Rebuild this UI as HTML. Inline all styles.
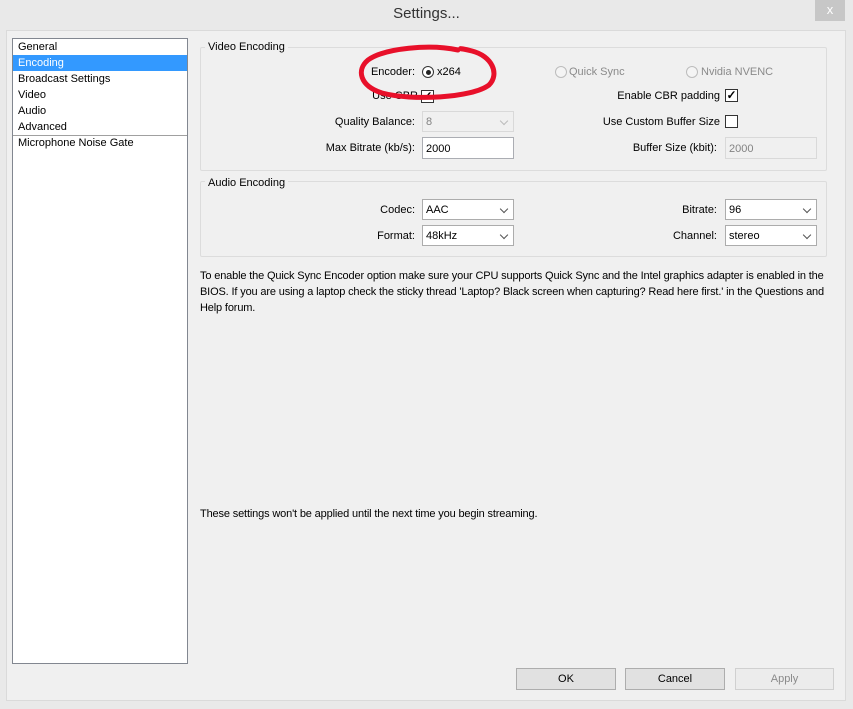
<!DOCTYPE html>
<html><head><meta charset="utf-8"><style>
*{box-sizing:border-box;margin:0;padding:0}
body{width:853px;height:709px;background:#e9e9e9;font-family:"Liberation Sans",sans-serif;font-size:11px;color:#000;position:relative;overflow:hidden}
.a{position:absolute;white-space:nowrap}
.r{text-align:right}
.client{position:absolute;left:6px;top:30px;width:840px;height:671px;background:#f0f0f0;border:1px solid #dadada}
.list{position:absolute;left:12px;top:38px;width:176px;height:626px;background:#fff;border:1px solid #828790}
.grp{position:absolute;border:1px solid #dcdcdc;border-radius:2px}
.combo{position:absolute;height:21px;border:1px solid #acacac;background:#fff;padding:4px 3px}
.combo.dis{background:#f0f0f0;border-color:#d9d9d9;color:#838383}
.combo:after{content:"";position:absolute;right:6px;top:6px;width:5px;height:5px;border-right:1.5px solid #555;border-bottom:1.5px solid #555;transform:rotate(45deg)}
.combo.dis:after{border-color:#bbb}
.inp{position:absolute;height:22px;border:1px solid #abadb3;background:#fff;padding:5px 3px}
.cb{position:absolute;width:13px;height:13px;border:1px solid #333;background:#fff;font-size:12px;line-height:11px;text-align:center;font-weight:bold}
.rad{position:absolute;width:12px;height:12px;border-radius:50%;border:1px solid #333;background:#fff}
.rad.dis{border-color:#bcbcbc;background:#f4f4f4}
.btn{position:absolute;height:22px;border:1px solid #adadad;background:#e1e1e1;text-align:center;line-height:20px}
</style></head><body>
<div class="a" style="left:0;top:5px;width:853px;text-align:center;font-size:15px;color:#333">Settings...</div>
<div class="a" style="left:815px;top:0;width:30px;height:21px;background:#c7c7c7;color:#fff;text-align:center;font-size:13px;line-height:20px">x</div>
<div class="client"></div>
<div class="list"></div>
<div class="a" style="left:13px;top:55px;width:174px;height:16px;background:#3399ff"></div>
<div class="a" style="left:18px;top:41px">General</div>
<div class="a" style="left:18px;top:57px;color:#fff">Encoding</div>
<div class="a" style="left:18px;top:73px">Broadcast Settings</div>
<div class="a" style="left:18px;top:89px">Video</div>
<div class="a" style="left:18px;top:105px">Audio</div>
<div class="a" style="left:18px;top:121px">Advanced</div>
<div class="a" style="left:13px;top:135px;width:174px;height:1px;background:#a0a0a0"></div>
<div class="a" style="left:18px;top:137px">Microphone Noise Gate</div>

<div class="grp" style="left:200px;top:47px;width:627px;height:124px"></div>
<div class="a" style="left:205px;top:41px;background:#f0f0f0;padding:0 3px">Video Encoding</div>
<div class="a r" style="left:300px;top:66px;width:115px">Encoder:</div>
<div class="rad" style="left:422px;top:66px"><div style="position:absolute;left:2.5px;top:2.5px;width:5px;height:5px;border-radius:50%;background:#222"></div></div>
<div class="a" style="left:437px;top:66px">x264</div>
<div class="rad dis" style="left:555px;top:66px"></div>
<div class="a" style="left:569px;top:66px;color:#8a8a8a">Quick Sync</div>
<div class="rad dis" style="left:686px;top:66px"></div>
<div class="a" style="left:701px;top:66px;color:#8a8a8a">Nvidia NVENC</div>
<div class="a r" style="left:300px;top:90px;width:118px">Use CBR</div>
<div class="cb" style="left:421px;top:90px">✓</div>
<div class="a r" style="left:560px;top:90px;width:160px">Enable CBR padding</div>
<div class="cb" style="left:725px;top:89px">✓</div>
<div class="a r" style="left:300px;top:116px;width:115px">Quality Balance:</div>
<div class="combo dis" style="left:422px;top:111px;width:92px">8</div>
<div class="a r" style="left:560px;top:116px;width:160px">Use Custom Buffer Size</div>
<div class="cb" style="left:725px;top:115px"></div>
<div class="a r" style="left:280px;top:142px;width:135px">Max Bitrate (kb/s):</div>
<div class="inp" style="left:422px;top:137px;width:92px">2000</div>
<div class="a r" style="left:560px;top:142px;width:157px">Buffer Size (kbit):</div>
<div class="inp" style="left:725px;top:137px;width:92px;background:#f0f0f0;border-color:#d9d9d9;color:#838383">2000</div>

<div class="grp" style="left:200px;top:181px;width:627px;height:76px"></div>
<div class="a" style="left:205px;top:177px;background:#f0f0f0;padding:0 3px">Audio Encoding</div>
<div class="a r" style="left:300px;top:204px;width:115px">Codec:</div>
<div class="combo" style="left:422px;top:199px;width:92px">AAC</div>
<div class="a r" style="left:300px;top:230px;width:115px">Format:</div>
<div class="combo" style="left:422px;top:225px;width:92px">48kHz</div>
<div class="a r" style="left:560px;top:204px;width:157px">Bitrate:</div>
<div class="combo" style="left:725px;top:199px;width:92px">96</div>
<div class="a r" style="left:560px;top:230px;width:157px">Channel:</div>
<div class="combo" style="left:725px;top:225px;width:92px">stereo</div>

<div class="a" style="left:200px;top:268px;width:632px;white-space:normal;line-height:16px;letter-spacing:-0.15px">To enable the Quick Sync Encoder option make sure your CPU supports Quick Sync and the Intel graphics adapter is enabled in the BIOS. If you are using a laptop check the sticky thread 'Laptop? Black screen when capturing? Read here first.' in the Questions and Help forum.</div>
<div class="a" style="left:200px;top:508px;letter-spacing:-0.15px">These settings won't be applied until the next time you begin streaming.</div>

<div class="btn" style="left:516px;top:668px;width:100px">OK</div>
<div class="btn" style="left:625px;top:668px;width:100px">Cancel</div>
<div class="btn" style="left:735px;top:668px;width:99px;background:#ececec;border-color:#d0d0d0;color:#8a8a8a">Apply</div>

<svg class="a" style="left:350px;top:40px" width="155" height="62" viewBox="350 40 155 62">
<path d="M458 50 C430 44 385 48 368 60 C356 70 360 86 382 93 C412 101 472 98 489 85 C500 74 492 56 472 51 C464 49 458 48 462 49" fill="none" stroke="#e8102a" stroke-width="5" stroke-linecap="round"/>
</svg>
</body></html>
